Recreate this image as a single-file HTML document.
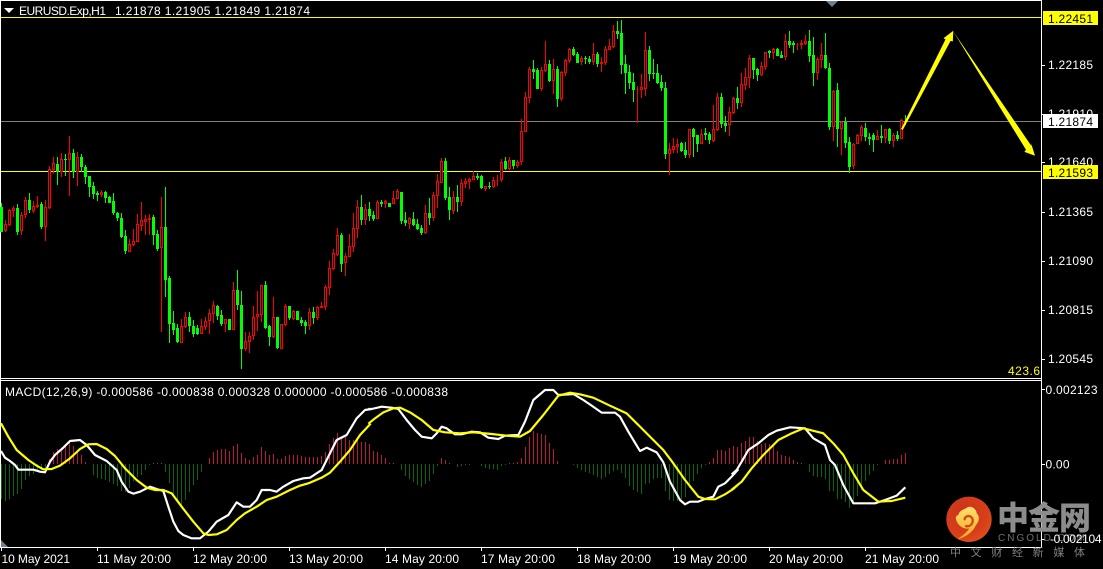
<!DOCTYPE html>
<html><head><meta charset="utf-8"><title>EURUSD H1</title>
<style>
html,body{margin:0;padding:0;background:#000;width:1103px;height:569px;overflow:hidden}
svg{position:absolute;left:0;top:0}
text{font-family:"Liberation Sans","Noto Sans CJK SC",sans-serif;font-size:12px;fill:#fff}
</style></head><body>
<svg width="1103" height="569" viewBox="0 0 1103 569" xmlns="http://www.w3.org/2000/svg">
<defs>
<radialGradient id="lg" cx=".4" cy=".35" r=".75"><stop offset="0" stop-color="#c9321a"/><stop offset=".7" stop-color="#d8401a"/><stop offset="1" stop-color="#e2561a"/></radialGradient>
<linearGradient id="cl" x1="0" y1="0" x2="0" y2="1"><stop offset="0" stop-color="#ffe070"/><stop offset="1" stop-color="#f2a81e"/></linearGradient>
</defs>
<rect width="1103" height="569" fill="#000"/>
<g shape-rendering="crispEdges" fill="none">
<!-- borders -->
<path d="M0.5 0V547M0 0.5H1042M1041.5 0V547M0 378.5H1042M0 380.5H1042M0 547.5H1042" stroke="#fff"/>
<path d="M1041 65.5h4M1041 114.5h4M1041 162.5h4M1041 212.5h4M1041 261.5h4M1041 310.5h4M1041 359.5h4M1041 389.5h4M1041 464.5h4M1041 539.5h4M1.5 547v4M97.5 547v4M193.5 547v4M289.5 547v4M385.5 547v4M481.5 547v4M577.5 547v4M673.5 547v4M769.5 547v4M865.5 547v4" stroke="#fff"/>
<!-- level lines -->
<path d="M1 17.5H1041M1 171.5H1041" stroke="#ffff00"/>
<path d="M1 121.5H1041" stroke="#808080"/>
<!-- green wicks -->
<path stroke="#00ff00" d="M1.5 203V232M17.5 204V235M29.5 193V213M41.5 202V229M57.5 157V185M65.5 154V176M73.5 149V178M81.5 154V172M85.5 165V184M89.5 176V197M93.5 182V199M97.5 191V201M105.5 191V203M109.5 196V203M113.5 193V215M117.5 212V221M121.5 213V238M125.5 230V254M153.5 215V245M157.5 230V251M165.5 187V297M169.5 276V343M173.5 311V335M177.5 324V343M189.5 312V332M193.5 320V337M197.5 325V335M217.5 305V320M221.5 310V326M229.5 319V330M237.5 270V310M241.5 291V369M265.5 281V329M269.5 325V346M277.5 317V349M289.5 306V320M297.5 311V320M301.5 317V326M305.5 320V334M313.5 307V324M341.5 233V272M361.5 195V225M369.5 202V221M373.5 211V221M381.5 200V207M389.5 203V207M401.5 192V224M405.5 212V226M413.5 212V226M417.5 219V230M421.5 225V235M429.5 198V225M445.5 158V200M449.5 187V220M457.5 185V212M477.5 173V180M481.5 175V189M489.5 182V189M505.5 157V170M513.5 160V169M533.5 60V79M537.5 68V89M549.5 60V82M557.5 66V107M573.5 47V56M577.5 52V63M585.5 56V64M589.5 56V64M597.5 52V67M617.5 21V39M621.5 20V74M625.5 55V94M629.5 65V89M633.5 73V102M649.5 46V81M653.5 59V79M657.5 64V84M661.5 75V91M665.5 82V159M681.5 142V152M685.5 142V158M693.5 128V157M697.5 135V152M705.5 128V140M709.5 132V144M721.5 93V128M725.5 116V132M737.5 87V109M753.5 58V79M757.5 68V81M769.5 50V58M777.5 48V56M781.5 51V58M789.5 31V48M793.5 41V53M809.5 30V62M813.5 37V86M825.5 33V69M829.5 63V130M837.5 83V147M845.5 117V148M849.5 137V173M865.5 123V141M869.5 133V145M873.5 133V152M881.5 125V143M889.5 128V144M897.5 131V141M905.5 115V125"/>
<!-- green bodies -->
<path stroke="#00ff00" stroke-width="3" d="M1.5 207V232M17.5 208V232M29.5 200V210M41.5 204V227M57.5 164V172M65.5 159V160M73.5 153V172M81.5 157V167M85.5 167V177M89.5 176V187M93.5 186V194M97.5 193V195M105.5 192V198M109.5 197V203M113.5 201V213M117.5 213V218M121.5 218V237M125.5 236V251M153.5 217V235M157.5 234V249M165.5 227V280M169.5 278V324M173.5 323V330M177.5 328V342M189.5 317V326M193.5 326V334M197.5 328V334M217.5 306V316M221.5 315V324M229.5 319V330M237.5 290V305M241.5 305V349M265.5 285V328M269.5 326V337M277.5 317V348M289.5 306V318M297.5 311V320M301.5 320V323M305.5 322V326M313.5 312V318M341.5 235V264M361.5 207V220M369.5 209V216M373.5 215V219M381.5 202V204M389.5 203V207M401.5 192V221M405.5 220V223M413.5 219V225M417.5 224V229M421.5 228V233M429.5 213V218M445.5 161V198M449.5 197V210M457.5 197V202M477.5 176V178M481.5 176V188M489.5 186V187M505.5 161V169M513.5 160V166M533.5 69V72M537.5 70V89M549.5 64V81M557.5 69V99M573.5 49V55M577.5 54V63M585.5 58V59M589.5 59V62M597.5 54V64M617.5 31V34M621.5 33V65M625.5 64V73M629.5 72V83M633.5 82V90M649.5 50V74M653.5 73V74M657.5 73V83M661.5 82V88M665.5 88V154M681.5 143V151M685.5 150V155M693.5 129V137M697.5 135V144M705.5 133V135M709.5 134V140M721.5 97V124M725.5 123V126M737.5 98V103M753.5 58V70M757.5 69V75M769.5 51V53M777.5 49V56M781.5 55V58M789.5 41V45M793.5 43V45M809.5 41V56M813.5 55V73M825.5 55V68M829.5 68V127M837.5 90V129M845.5 122V143M849.5 142V167M865.5 128V137M869.5 137V139M873.5 135V140M881.5 136V138M889.5 129V141M897.5 135V139M905.5 121V122"/>
<!-- red wicks -->
<path stroke="#ff0000" d="M5.5 220V232M9.5 209V226M13.5 206V217M21.5 212V235M25.5 197V218M33.5 201V213M37.5 196V208M45.5 200V241M49.5 166V209M53.5 157V174M61.5 153V177M69.5 136V196M77.5 152V186M101.5 190V197M129.5 239V252M133.5 229V246M137.5 214V242M141.5 202V231M145.5 215V235M149.5 214V235M161.5 197V332M181.5 319V343M185.5 312V328M201.5 319V334M205.5 317V330M209.5 309V334M213.5 301V323M225.5 319V332M233.5 282V330M245.5 332V351M249.5 332V353M253.5 306V340M257.5 291V331M261.5 285V322M273.5 297V338M281.5 324V349M285.5 304V326M293.5 310V320M309.5 308V330M317.5 306V320M321.5 302V308M325.5 285V310M329.5 261V295M333.5 249V270M337.5 228V256M345.5 253V276M349.5 234V257M353.5 213V252M357.5 200V238M365.5 204V225M377.5 200V219M385.5 200V208M393.5 191V204M397.5 189V199M409.5 217V229M425.5 205V234M433.5 192V221M437.5 174V208M441.5 158V183M453.5 191V214M461.5 179V206M465.5 178V188M469.5 178V189M473.5 171V180M485.5 186V191M493.5 177V188M497.5 175V186M501.5 159V182M509.5 157V170M517.5 160V168M521.5 119V165M525.5 92V132M529.5 67V103M541.5 67V91M545.5 41V72M553.5 59V94M561.5 71V101M565.5 59V76M569.5 48V63M581.5 56V65M593.5 43V65M601.5 57V72M605.5 46V65M609.5 39V50M613.5 25V48M637.5 86V123M641.5 74V98M645.5 32V96M669.5 143V175M673.5 138V153M677.5 139V153M689.5 129V158M701.5 129V144M713.5 105V142M717.5 93V131M729.5 107V136M733.5 97V114M741.5 73V107M745.5 68V90M749.5 55V88M761.5 62V76M765.5 52V70M773.5 48V59M785.5 34V60M797.5 43V50M801.5 40V49M805.5 35V45M817.5 57V80M821.5 43V68M833.5 90V141M841.5 121V155M853.5 143V169M857.5 134V144M861.5 125V141M877.5 130V140M885.5 129V143M893.5 133V147M901.5 119V139"/>
<!-- red bodies -->
<path stroke="#ff0000" fill="#000" d="M4.5 224.5h2v6h-2zM8.5 210.5h2v14h-2zM12.5 208.5h2v2h-2zM20.5 215.5h2v15h-2zM24.5 200.5h2v14h-2zM32.5 206.5h2v4h-2zM36.5 205.5h2v1h-2zM44.5 207.5h2v19h-2zM48.5 169.5h2v38h-2zM52.5 163.5h2v6h-2zM60.5 159.5h2v12h-2zM68.5 153.5h2v6h-2zM76.5 157.5h2v14h-2zM100.5 192.5h2v2h-2zM128.5 244.5h2v7h-2zM132.5 241.5h2v3h-2zM136.5 224.5h2v17h-2zM140.5 220.5h2v5h-2zM144.5 219.5h2v2h-2zM148.5 218.5h2v1h-2zM160.5 227.5h2v20h-2zM180.5 326.5h2v16h-2zM184.5 317.5h2v9h-2zM200.5 326.5h2v7h-2zM204.5 321.5h2v5h-2zM208.5 313.5h2v7h-2zM212.5 305.5h2v8h-2zM224.5 319.5h2v4h-2zM232.5 290.5h2v39h-2zM244.5 341.5h2v7h-2zM248.5 336.5h2v5h-2zM252.5 317.5h2v18h-2zM256.5 314.5h2v2h-2zM260.5 285.5h2v29h-2zM272.5 317.5h2v19h-2zM280.5 324.5h2v24h-2zM284.5 306.5h2v18h-2zM292.5 311.5h2v7h-2zM308.5 312.5h2v13h-2zM316.5 307.5h2v10h-2zM320.5 306.5h2v1h-2zM324.5 287.5h2v19h-2zM328.5 268.5h2v19h-2zM332.5 253.5h2v15h-2zM336.5 235.5h2v19h-2zM344.5 256.5h2v6h-2zM348.5 246.5h2v10h-2zM352.5 228.5h2v18h-2zM356.5 207.5h2v21h-2zM364.5 209.5h2v10h-2zM376.5 202.5h2v16h-2zM384.5 201.5h2v2h-2zM392.5 198.5h2v5h-2zM396.5 191.5h2v7h-2zM408.5 218.5h2v5h-2zM424.5 213.5h2v19h-2zM432.5 195.5h2v22h-2zM436.5 181.5h2v14h-2zM440.5 161.5h2v21h-2zM452.5 197.5h2v13h-2zM460.5 183.5h2v18h-2zM464.5 181.5h2v2h-2zM468.5 179.5h2v2h-2zM472.5 176.5h2v3h-2zM484.5 186.5h2v2h-2zM492.5 180.5h2v6h-2zM496.5 180.5h2v0h-2zM500.5 162.5h2v17h-2zM508.5 160.5h2v8h-2zM516.5 162.5h2v3h-2zM520.5 131.5h2v30h-2zM524.5 97.5h2v34h-2zM528.5 69.5h2v28h-2zM540.5 70.5h2v18h-2zM544.5 64.5h2v6h-2zM552.5 69.5h2v11h-2zM560.5 72.5h2v26h-2zM564.5 60.5h2v12h-2zM568.5 49.5h2v11h-2zM580.5 58.5h2v3h-2zM592.5 54.5h2v7h-2zM600.5 62.5h2v1h-2zM604.5 49.5h2v13h-2zM608.5 46.5h2v3h-2zM612.5 31.5h2v15h-2zM636.5 89.5h2v0h-2zM640.5 87.5h2v2h-2zM644.5 50.5h2v38h-2zM668.5 149.5h2v4h-2zM672.5 146.5h2v3h-2zM676.5 144.5h2v2h-2zM688.5 129.5h2v25h-2zM700.5 134.5h2v9h-2zM712.5 129.5h2v11h-2zM716.5 97.5h2v32h-2zM728.5 112.5h2v12h-2zM732.5 98.5h2v14h-2zM740.5 84.5h2v18h-2zM744.5 77.5h2v7h-2zM748.5 58.5h2v19h-2zM760.5 66.5h2v8h-2zM764.5 52.5h2v14h-2zM772.5 49.5h2v3h-2zM784.5 41.5h2v15h-2zM796.5 44.5h2v0h-2zM800.5 43.5h2v1h-2zM804.5 41.5h2v2h-2zM816.5 59.5h2v13h-2zM820.5 55.5h2v4h-2zM832.5 91.5h2v35h-2zM840.5 122.5h2v6h-2zM852.5 144.5h2v21h-2zM856.5 135.5h2v8h-2zM860.5 127.5h2v8h-2zM876.5 136.5h2v3h-2zM884.5 129.5h2v8h-2zM892.5 135.5h2v5h-2zM900.5 120.5h2v18h-2z"/>
<!-- histogram -->
<path stroke="#0b660b" d="M1.5 464V499M5.5 464V501M9.5 464V499M13.5 464V496M17.5 464V494M21.5 464V489M25.5 464V480M29.5 464V476M33.5 464V474M37.5 464V470M41.5 464V470M45.5 464V468M93.5 464V475M97.5 464V478M101.5 464V479M105.5 464V480M109.5 464V482M113.5 464V484M117.5 464V486M121.5 464V491M125.5 464V492M129.5 464V488M133.5 464V481M137.5 464V477M141.5 464V475M145.5 464V470M149.5 464V465M165.5 464V472M169.5 464V483M173.5 464V495M177.5 464V501M181.5 464V505M185.5 464V500M189.5 464V492M193.5 464V485M197.5 464V480M201.5 464V472M401.5 464V470M405.5 464V476M409.5 464V479M413.5 464V482M417.5 464V485M421.5 464V487M425.5 464V484M429.5 464V481M433.5 464V474M437.5 464V466M457.5 464V467M461.5 464V466M465.5 464V465M469.5 464V465M481.5 464V466M485.5 464V468M489.5 464V469M493.5 464V469M497.5 464V470M501.5 464V466M505.5 464V465M573.5 464V465M577.5 464V468M581.5 464V470M585.5 464V472M589.5 464V473M593.5 464V475M597.5 464V477M601.5 464V479M605.5 464V477M609.5 464V474M613.5 464V471M617.5 464V470M621.5 464V473M625.5 464V478M629.5 464V486M633.5 464V490M637.5 464V492M641.5 464V494M645.5 464V484M649.5 464V483M653.5 464V479M657.5 464V478M661.5 464V478M665.5 464V491M669.5 464V500M673.5 464V501M677.5 464V501M681.5 464V499M685.5 464V497M689.5 464V488M693.5 464V481M697.5 464V474M701.5 464V468M705.5 464V465M809.5 464V472M813.5 464V476M817.5 464V477M821.5 464V477M825.5 464V479M829.5 464V491M833.5 464V491M837.5 464V499M841.5 464V499M845.5 464V502M849.5 464V508M853.5 464V503M857.5 464V496M861.5 464V490M865.5 464V481M869.5 464V475M873.5 464V471M877.5 464V465"/>
<path stroke="#c0173c" d="M49.5 464V459M53.5 464V452M57.5 464V449M61.5 464V449M65.5 464V446M69.5 464V442M73.5 464V446M77.5 464V451M81.5 464V455M85.5 464V462M153.5 464V463M157.5 464V463M161.5 464V463M209.5 464V458M213.5 464V452M217.5 464V450M221.5 464V449M225.5 464V449M229.5 464V451M233.5 464V446M237.5 464V444M241.5 464V453M245.5 464V458M249.5 464V460M253.5 464V457M257.5 464V455M261.5 464V447M265.5 464V451M269.5 464V455M273.5 464V454M277.5 464V459M281.5 464V459M285.5 464V456M289.5 464V455M293.5 464V455M297.5 464V455M301.5 464V456M305.5 464V457M309.5 464V457M313.5 464V457M317.5 464V457M321.5 464V456M325.5 464V452M329.5 464V444M333.5 464V438M337.5 464V433M341.5 464V438M345.5 464V437M349.5 464V440M353.5 464V440M357.5 464V438M361.5 464V442M365.5 464V442M369.5 464V444M373.5 464V451M377.5 464V452M381.5 464V455M385.5 464V458M389.5 464V463M393.5 464V463M441.5 464V458M445.5 464V460M449.5 464V463M509.5 464V463M513.5 464V463M517.5 464V462M521.5 464V458M525.5 464V447M529.5 464V437M533.5 464V431M537.5 464V433M541.5 464V434M545.5 464V435M549.5 464V443M553.5 464V449M557.5 464V461M709.5 464V462M713.5 464V458M717.5 464V450M721.5 464V450M725.5 464V451M729.5 464V448M733.5 464V446M737.5 464V447M741.5 464V443M745.5 464V441M749.5 464V437M753.5 464V437M757.5 464V441M761.5 464V444M765.5 464V443M769.5 464V444M773.5 464V446M777.5 464V451M781.5 464V455M785.5 464V456M789.5 464V457M793.5 464V460M797.5 464V462M801.5 464V463M885.5 464V460M889.5 464V460M893.5 464V459M897.5 464V459M901.5 464V455M905.5 464V453"/>
</g>
<!-- MACD lines -->
<g fill="none" stroke-width="6.5" stroke-linejoin="round">
<g transform="translate(0,375) scale(.33333)">
<polyline stroke="#fff" points="3,228 15,248 30,258 45,270 55,284 100,284 120,290 135,292 150,260 165,240 190,218 210,198 240,195 260,210 285,240 320,258 350,285 365,320 385,350 400,356 420,350 450,335 470,342 490,348 505,395 520,440 535,468 550,480 575,490 600,490 625,470 650,440 685,420 710,382 730,395 750,395 770,375 785,345 810,345 830,350 850,335 880,318 910,310 930,308 965,285 985,245 1010,195 1040,180 1070,130 1095,105 1115,102"/>
<polyline stroke="#ffff00" points="3,145 25,185 50,225 85,255 110,272 130,283 155,282 180,272 210,250 240,222 265,208 290,207 320,222 345,243 375,280 410,315 440,338 465,345 490,345 515,355 545,395 580,440 610,475 625,480 650,478 680,465 710,435 735,415 770,395 800,375 830,365 870,345 900,332 925,325 965,308 990,293 1020,260 1050,225 1080,180 1112,146"/>
</g>
<g transform="translate(370,375) scale(.33333)">
<polyline stroke="#fff" points="-5,102 5,102 35,95 65,98 85,102 110,135 135,165 155,185 185,190 200,175 215,155 230,160 255,178 275,178 305,170 330,172 355,188 385,192 405,182 445,180 465,140 490,75 525,45 550,45 565,60 610,57 640,75 665,92 695,113 735,113 750,125 775,170 810,228 830,218 860,232 880,262 900,320 930,375 945,388 960,380 985,380 1005,372 1030,365 1045,335 1065,325 1085,305 1105,283"/>
<polyline stroke="#ffff00" points="-5,146 15,130 40,112 70,100 90,98 120,112 155,135 190,165 225,172 270,175 310,172 365,177 410,182 450,185 480,168 520,120 565,62 600,53 630,58 670,68 720,92 770,115 810,155 850,195 880,225 910,265 945,315 985,365 1005,372 1035,373 1065,358 1090,342 1105,328"/>
</g>
<g transform="translate(735,375) scale(.33333)">
<polyline stroke="#fff" points="-10,298 5,285 20,260 40,225 70,205 100,180 125,167 165,157 210,160 235,190 270,210 285,255 300,270 325,330 355,385 385,385 420,385 450,375 485,362 511,337"/>
<polyline stroke="#ffff00" points="-10,344 20,320 50,280 85,240 130,195 170,175 205,160 265,175 295,205 325,240 355,295 385,345 430,380 470,378 511,368"/>
</g>
</g>
<!-- arrows -->
<path fill="#ffff00" d="M901 129L945.5 39.4 943.5 38.3 953.3 30.7 952.8 41.5 950.6 40.9 902.8 130Z"/>
<path fill="#ffff00" d="M953 31L1031.4 146 1031 143 1035 155.7 1024.4 151.9 1026 149.8Z"/>
<!-- small triangles -->
<path fill="#708090" d="M826 1H838L832 7ZM1 540L8 547H1Z"/>
<path fill="#fff" d="M4 8H14L9 13Z"/>
<!-- texts -->
<text x="19" y="15" textLength="87">EURUSD.Exp,H1</text>
<text x="115" y="15" textLength="195">1.21878 1.21905 1.21849 1.21874</text>
<text x="1048" y="69" textLength="45">1.22185</text>
<text x="1048" y="118" textLength="45">1.21910</text>
<text x="1048" y="166" textLength="45">1.21640</text>
<text x="1048" y="216" textLength="45">1.21365</text>
<text x="1048" y="265" textLength="45">1.21090</text>
<text x="1048" y="314" textLength="45">1.20815</text>
<text x="1048" y="363" textLength="45">1.20545</text>
<!-- price tags -->
<rect x="1043" y="11" width="55" height="14" fill="#ffff00"/>
<rect x="1043" y="114" width="55" height="14" fill="#fff"/>
<rect x="1043" y="165" width="55" height="14" fill="#ffff00"/>
<text x="1048" y="23" textLength="45" style="fill:#000">1.22451</text>
<text x="1048" y="126" textLength="45" style="fill:#000">1.21874</text>
<text x="1048" y="177" textLength="45" style="fill:#000">1.21593</text>
<text x="1008" y="375" textLength="32" style="fill:#ffff00">423.6</text>
<text x="5" y="396" textLength="443">MACD(12,26,9) -0.000586 -0.000838 0.000328 0.000000 -0.000586 -0.000838</text>
<!-- logo -->
<g transform="translate(930,480) scale(.33333)">
<circle cx="117" cy="118" r="68" fill="url(#lg)"/>
<path fill="url(#cl)" d="M85 105C88 90 105 88 112 82C125 76 140 88 140 100C150 108 148 125 138 135C128 158 105 172 82 178C100 165 112 155 118 145C100 150 82 135 78 118C76 110 80 106 85 105Z"/>
<path fill="none" stroke="#d0481a" stroke-width="7" stroke-linecap="round" d="M104 118C105 105 125 105 128 118C130 132 118 142 108 138"/>
</g>
<text x="997" y="529" textLength="94" style="font-size:32px;font-weight:900;fill:#8c8c8c;font-family:'Liberation Sans','Noto Sans CJK SC',sans-serif">中金网</text>
<text x="998" y="541" textLength="87" style="font-size:10px;fill:#6e6e6e">CNGOLD.COM</text>
<text x="950" y="556" textLength="135" style="font-size:11px;fill:#808080">中文财经新媒体</text>
<!-- axis labels over logo -->
<text x="1045.5" y="394" textLength="52">0.002123</text>
<text x="1045.5" y="468.5" textLength="24">0.00</text>
<text x="1050" y="543" textLength="51.5">-0.002104</text>
<text x="1.5" y="563" textLength="68.5">10 May 2021</text>
<text x="97" y="563" textLength="74">11 May 20:00</text>
<text x="193" y="563" textLength="74">12 May 20:00</text>
<text x="289" y="563" textLength="74">13 May 20:00</text>
<text x="385" y="563" textLength="74">14 May 20:00</text>
<text x="481" y="563" textLength="74">17 May 20:00</text>
<text x="577" y="563" textLength="74">18 May 20:00</text>
<text x="673" y="563" textLength="74">19 May 20:00</text>
<text x="769" y="563" textLength="74">20 May 20:00</text>
<text x="865" y="563" textLength="74">21 May 20:00</text>
</svg>
</body></html>
